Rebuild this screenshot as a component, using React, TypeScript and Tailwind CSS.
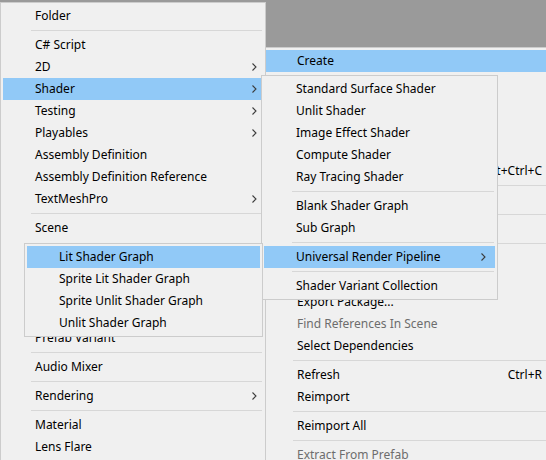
type Entry =
  | { kind: "sep" }
  | {
      kind: "item";
      label: string;
      active?: boolean;
      disabled?: boolean;
      submenu?: boolean;
      shortcut?: string;
    };

const sep: Entry = { kind: "sep" };
const item = (label: string, extra: Partial<Extract<Entry, { kind: "item" }>> = {}): Entry => ({
  kind: "item",
  label,
  ...extra,
});

const createMenu: Entry[] = [
  item("Folder"),
  sep,
  item("C# Script"),
  item("2D", { submenu: true }),
  item("Shader", { submenu: true, active: true }),
  item("Testing", { submenu: true }),
  item("Playables", { submenu: true }),
  item("Assembly Definition"),
  item("Assembly Definition Reference"),
  item("TextMeshPro", { submenu: true }),
  sep,
  item("Scene"),
  item("Scene Template"),
  item("Scene Template From Scene"),
  item("Volume Profile"),
  item("Prefab"),
  item("Prefab Variant"),
  sep,
  item("Audio Mixer"),
  sep,
  item("Rendering", { submenu: true }),
  sep,
  item("Material"),
  item("Lens Flare"),
  item("Render Texture"),
];

const contextMenu: Entry[] = [
  item("Create", { active: true, submenu: true }),
  item("Show in Explorer"),
  item("Open"),
  item("Delete"),
  item("Rename"),
  item("Copy Path", { shortcut: "Alt+Ctrl+C" }),
  sep,
  item("Open Scene Additive"),
  sep,
  item("View in Package Manager"),
  sep,
  item("Import New Asset..."),
  item("Import Package", { submenu: true }),
  item("Export Package..."),
  item("Find References In Scene", { disabled: true }),
  item("Select Dependencies"),
  sep,
  item("Refresh", { shortcut: "Ctrl+R" }),
  item("Reimport"),
  sep,
  item("Reimport All"),
  sep,
  item("Extract From Prefab", { disabled: true }),
];

const shaderMenu: Entry[] = [
  item("Standard Surface Shader"),
  item("Unlit Shader"),
  item("Image Effect Shader"),
  item("Compute Shader"),
  item("Ray Tracing Shader"),
  sep,
  item("Blank Shader Graph"),
  item("Sub Graph"),
  sep,
  item("Universal Render Pipeline", { submenu: true, active: true }),
  sep,
  item("Shader Variant Collection"),
];

const urpMenu: Entry[] = [
  item("Lit Shader Graph", { active: true }),
  item("Sprite Lit Shader Graph"),
  item("Sprite Unlit Shader Graph"),
  item("Unlit Shader Graph"),
];

function Chevron() {
  return (
    <svg width="5" height="8" viewBox="0 0 5 8" className="shrink-0">
      <polyline points="0.5,0.5 4,4 0.5,7.5" fill="none" stroke="#3c3c3c" strokeWidth="1.1" />
    </svg>
  );
}

function Menu({
  entries,
  className,
  arrowPad,
  shortcutPad = "pr-[17px]",
}: {
  entries: Entry[];
  className: string;
  arrowPad: string;
  shortcutPad?: string;
}) {
  return (
    <div className={`absolute flex flex-col border border-[#cccccc] bg-[#f0f0f0] p-[2px] ${className}`}>
      {entries.map((entry, i) =>
        entry.kind === "sep" ? (
          <div key={i} className="flex h-[7px] items-center pl-[28px] pr-[1px]">
            <div className="h-px w-full bg-[#d7d7d7]" />
          </div>
        ) : (
          <div
            key={i}
            className={`flex h-[22px] shrink-0 items-center justify-between pl-8 ${
              entry.shortcut ? shortcutPad : arrowPad
            } ${entry.active ? "bg-[#91c9f7]" : ""} ${
              entry.disabled ? "text-[#6d6d6d]" : "text-black"
            }`}
          >
            <span className="whitespace-nowrap">{entry.label}</span>
            {entry.shortcut ? (
              <span className="whitespace-nowrap">{entry.shortcut}</span>
            ) : entry.submenu ? (
              <Chevron />
            ) : null}
          </div>
        ),
      )}
    </div>
  );
}

export default function App() {
  return (
    <div className="relative h-[460px] w-[546px] overflow-hidden bg-[#9a9a9a] font-['Noto_Sans',sans-serif] text-[12px] leading-none">
      <Menu
        entries={contextMenu}
        className="left-[262px] top-[47px] w-[330px]"
        arrowPad="pr-[20px]"
        shortcutPad="pr-[47px]"
      />
      <Menu entries={createMenu} className="left-0 top-[2px] w-[266px]" arrowPad="pr-[6px]" />
      <Menu entries={shaderMenu} className="left-[261px] top-[75px] w-[237px]" arrowPad="pr-[9px]" />
      <Menu entries={urpMenu} className="left-[24px] top-[243px] w-[239px]" arrowPad="pr-[9px]" />
    </div>
  );
}
